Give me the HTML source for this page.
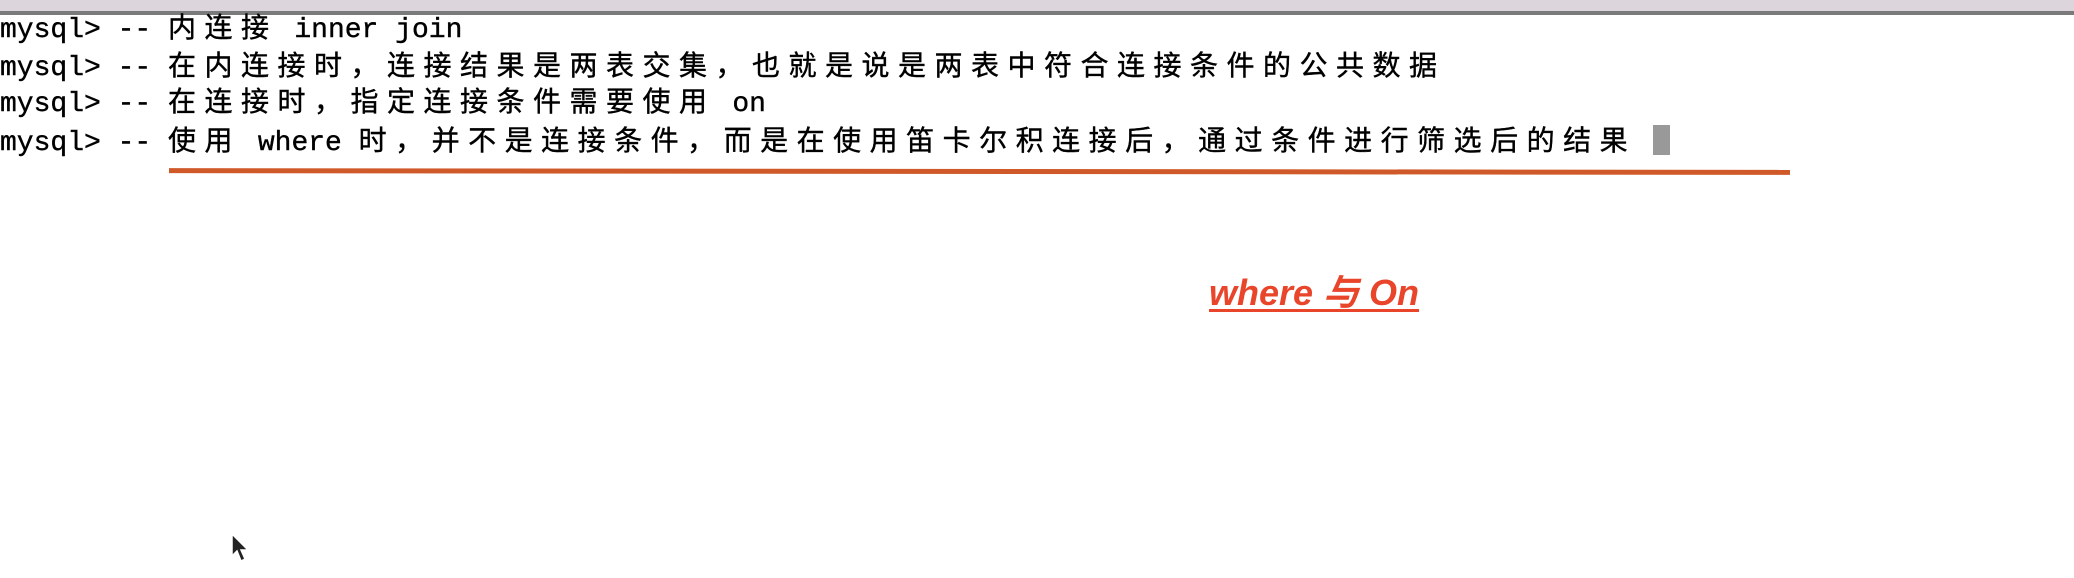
<!DOCTYPE html>
<html><head><meta charset="utf-8"><style>
html,body{margin:0;padding:0;width:2074px;height:578px;background:#fff;overflow:hidden;position:relative}
.top{position:absolute;left:0;top:0;width:2074px;height:11px;background:#dcd6dc}
.topl{position:absolute;left:0;top:11px;width:2074px;height:4px;background:#7a7a7a}
.ln{position:absolute;left:0;font-family:"Liberation Mono","Noto Sans CJK SC",monospace;font-size:28px;line-height:38px;color:#000;white-space:pre;-webkit-text-stroke:0.4px #000}
.c{letter-spacing:8.5px;font-family:"Noto Sans CJK SC","WenQuanYi Zen Hei",sans-serif;font-size:28px}
.cur{display:inline-block;width:17px;height:30px;background:#999;vertical-align:-5px}
.ul{position:absolute;left:169px;top:169px;width:1621px;height:5px;background:#d0592a;transform:skewY(0.06deg)}
.t{position:absolute;left:1209px;top:264px;font-family:"Liberation Sans","Noto Sans CJK SC",sans-serif;font-style:italic;font-weight:bold;font-size:36px;color:#e8452a;text-decoration:underline;text-decoration-thickness:3px;text-underline-offset:4px}
</style></head><body>
<div class="top"></div><div class="topl"></div>
<div class="ln" style="top:7px">mysql&gt; -- <span class="c">内连接</span> inner join</div>
<div class="ln" style="top:45px">mysql&gt; -- <span class="c">在内连接时，连接结果是两表交集，也就是说是两表中符合连接条件的公共数据</span></div>
<div class="ln" style="top:81px">mysql&gt; -- <span class="c">在连接时，指定连接条件需要使用</span> on</div>
<div class="ln" style="top:120px">mysql&gt; -- <span class="c">使用</span> where <span class="c">时，并不是连接条件，而是在使用笛卡尔积连接后，通过条件进行筛选后的结果</span> <span class="cur"></span></div>
<div class="ul"></div>
<div class="t">where 与 On</div>
<svg style="position:absolute;left:228px;top:530px" width="28" height="36" viewBox="0 0 28 36"><path d="M4 4 L4 26 L9 21 L13 31 L17 29 L13 20 L20 20 Z" fill="#222" stroke="#fff" stroke-width="1.5"/></svg>
</body></html>
